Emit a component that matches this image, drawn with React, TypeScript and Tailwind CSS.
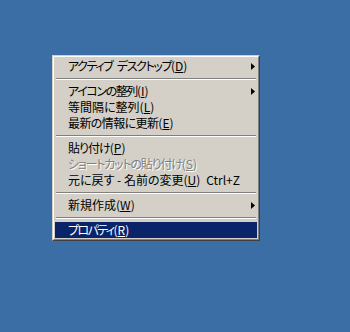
import React from "react";

type Item =
  | { kind: "sep" }
  | {
      kind: "item";
      label: string;
      key: string;
      track: string;
      submenu?: boolean;
      disabled?: boolean;
      selected?: boolean;
      shortcut?: string;
    };

// tracking per row: kana in the original bitmap font is narrower than Noto's
const items: Item[] = [
  { kind: "item", label: "アクティブ\u2002デスクトップ", key: "D", track: "tracking-[-1.4px]", submenu: true },
  { kind: "sep" },
  { kind: "item", label: "アイコンの整列", key: "I", track: "tracking-[-1.4px]", submenu: true },
  { kind: "item", label: "等間隔に整列", key: "L", track: "tracking-normal" },
  { kind: "item", label: "最新の情報に更新", key: "E", track: "tracking-[-0.6px]" },
  { kind: "sep" },
  { kind: "item", label: "貼り付け", key: "P", track: "tracking-[-1px]" },
  { kind: "item", label: "ショートカットの貼り付け", key: "S", track: "tracking-[-1.2px]", disabled: true },
  { kind: "item", label: "元に戻す - 名前の変更", key: "U", track: "tracking-normal", shortcut: "Ctrl+Z" },
  { kind: "sep" },
  { kind: "item", label: "新規作成", key: "W", track: "tracking-normal", submenu: true },
  { kind: "sep" },
  { kind: "item", label: "プロパティ", key: "R", track: "tracking-[-1.6px]", selected: true },
];

function Arrow({ white }: { white?: boolean }) {
  return (
    <svg width="4" height="7" viewBox="0 0 4 7" className="ml-auto mr-[2px]">
      <polygon points="0,0 4,3.5 0,7" fill={white ? "#ffffff" : "#000000"} />
    </svg>
  );
}

export default function App() {
  return (
    <div
      className="w-[350px] h-[332px] bg-[#3a6ea5] pt-[55px] pl-[52px] text-[12px] leading-[16px] [font-feature-settings:'palt']"
      style={{ fontFamily: '"Noto Sans CJK JP", "Noto Sans", sans-serif' }}
    >
      <div className="w-[208px] bg-[#d4d0c8] border border-t-[#d4d0c8] border-l-[#d4d0c8] border-b-[#404040] border-r-[#404040]">
        <div className="border border-t-white border-l-white border-b-[#808080] border-r-[#808080] p-[1px]">
          {items.map((it, i) =>
            it.kind === "sep" ? (
              <div key={i} className="h-[9px] flex flex-col justify-center px-[1px]">
                <div className="h-[1px] bg-[#808080]" />
                <div className="h-[1px] bg-white" />
              </div>
            ) : (
              <div
                key={i}
                className={
                  "h-[16px] flex items-center pl-[13px] whitespace-nowrap " +
                  (it.selected
                    ? "bg-[#0a246a] text-white"
                    : it.disabled
                    ? "text-[#808080] [text-shadow:1px_1px_0_#ffffff]"
                    : "text-black")
                }
              >
                <span className="-mt-[1px]">
                  <span className={it.track}>{it.label}</span>(
                  <span className="underline underline-offset-1">{it.key}</span>)
                </span>
                {it.shortcut && <span className="ml-auto mr-[17px] -mt-[1px]">{it.shortcut}</span>}
                {it.submenu && <Arrow white={it.selected} />}
              </div>
            )
          )}
        </div>
      </div>
    </div>
  );
}
